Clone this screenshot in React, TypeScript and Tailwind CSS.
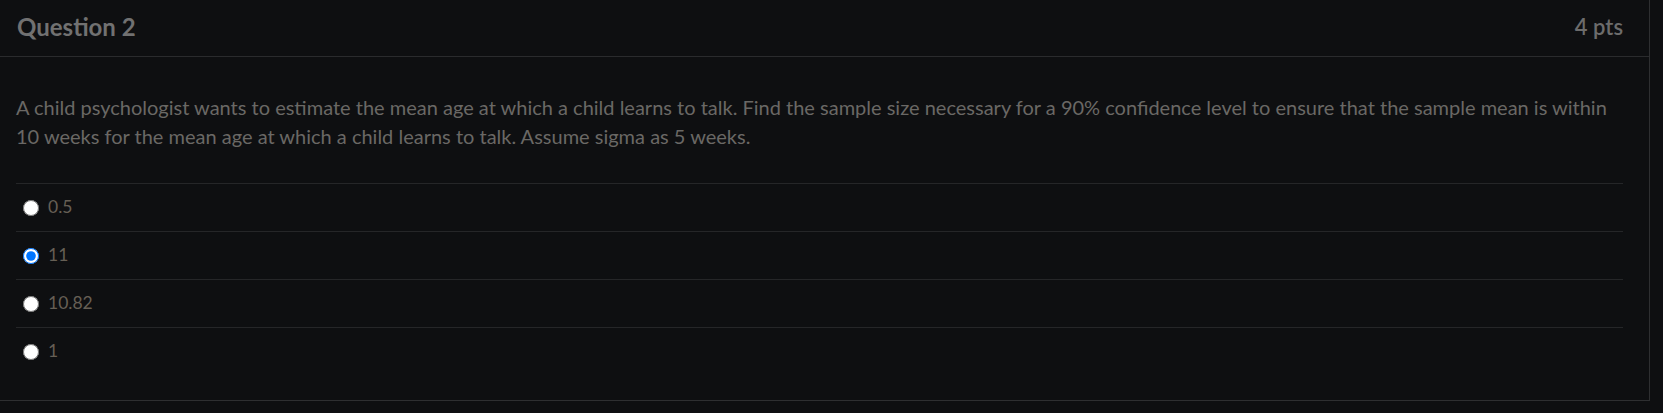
import React, { useState } from 'react'

const answers = ['0.5', '11', '10.82', '1']

const App: React.FC = () => {
  const [selected, setSelected] = useState('11')

  return (
    <div className="min-h-[413px] w-full bg-[#0e0f11] font-['Lato','Open_Sans',sans-serif]">
      <div className="w-[1650px] border-r border-b border-[#2e2f31] pb-[25px]">
        <div className="flex h-[57px] items-center justify-between border-b border-[#2a2b2d] pl-[17px] pr-[26px] pb-[3px]">
          <h2 className="text-[24px] font-bold text-[#717171]">Question 2</h2>
          <span className="text-[22px] font-semibold text-[#6c6c6c]">4 pts</span>
        </div>

        <div className="pl-[16px] pr-[26px] pt-[36px]">
          <p className="text-[20px] leading-[29px] text-[#6a6865]">
            A child psychologist wants to estimate the mean age at which a child learns to talk. Find the sample size
            necessary for a 90% confidence level to ensure that the sample mean is within 10 weeks for the mean age at
            which a child learns to talk. Assume sigma as 5 weeks.
          </p>

          <div className="mt-[32px]">
            {answers.map(a => (
              <label
                key={a}
                className="flex h-[48px] cursor-pointer items-center border-t border-[#252628] pl-[7px]"
              >
                <input
                  type="radio"
                  name="q2"
                  checked={selected === a}
                  onChange={() => setSelected(a)}
                  className="m-0 h-[16px] w-[16px] accent-[#0075ff]"
                />
                <span className="ml-[9px] text-[17.5px] text-[#665f55]">{a}</span>
              </label>
            ))}
          </div>
        </div>
      </div>
    </div>
  )
}

export default App
